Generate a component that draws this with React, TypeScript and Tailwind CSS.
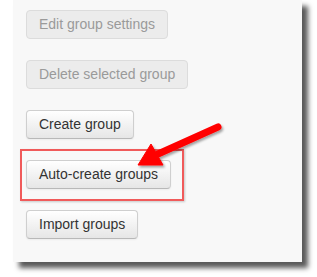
import React from 'react';

function Btn({ label, disabled }: { label: string; disabled?: boolean }) {
  if (disabled) {
    return (
      <div className="h-[29px] px-[12px] flex items-center rounded-[4px] border border-[#dcdcdc] bg-[#ececec] text-[#9a9a9a] text-[14px] w-fit">
        {label}
      </div>
    );
  }
  return (
    <div className="h-[29px] px-[12px] flex items-center rounded-[4px] border border-[#cfcfcf] border-b-[#b8b8b8] bg-gradient-to-b from-white to-[#e6e6e6] text-[#333] text-[14px] w-fit shadow-[inset_0_1px_0_rgba(255,255,255,0.3),0_1px_2px_rgba(0,0,0,0.05)]">
      {label}
    </div>
  );
}

export default function App() {
  return (
    <div className="relative w-[317px] h-[277px] bg-white overflow-hidden font-['Liberation_Sans',Arial,sans-serif]">
      {/* panel */}
      <div className="ml-[13px] w-[289px] h-[262px] bg-[#f8f8f8] shadow-[6px_6px_5px_rgba(0,0,0,0.65)] pt-[10px] pl-[13px] flex flex-col gap-[21px]">
        <Btn label="Edit group settings" disabled />
        <Btn label="Delete selected group" disabled />
        <Btn label="Create group" />
        <Btn label="Auto-create groups" />
        <Btn label="Import groups" />
      </div>

      {/* highlight box */}
      <div className="absolute left-[20px] top-[149px] w-[164px] h-[52px] border-2 border-[#f05a5a] shadow-[1px_1px_2px_rgba(0,0,0,0.2)]" />

      {/* arrow */}
      <svg className="absolute left-0 top-0" width="317" height="277" viewBox="0 0 317 277">
        <defs>
          <filter id="sh" x="-20%" y="-20%" width="140%" height="160%">
            <feDropShadow dx="1.5" dy="2" stdDeviation="1.2" floodColor="#000" floodOpacity="0.35" />
          </filter>
        </defs>
        <g filter="url(#sh)" fill="#ff0000" stroke="#ff0000">
          <line x1="218" y1="127" x2="158" y2="154" strokeWidth="7" strokeLinecap="round" />
          <polygon points="138,165 151,144 163,165" strokeWidth="1" strokeLinejoin="round" />
        </g>
      </svg>
    </div>
  );
}
